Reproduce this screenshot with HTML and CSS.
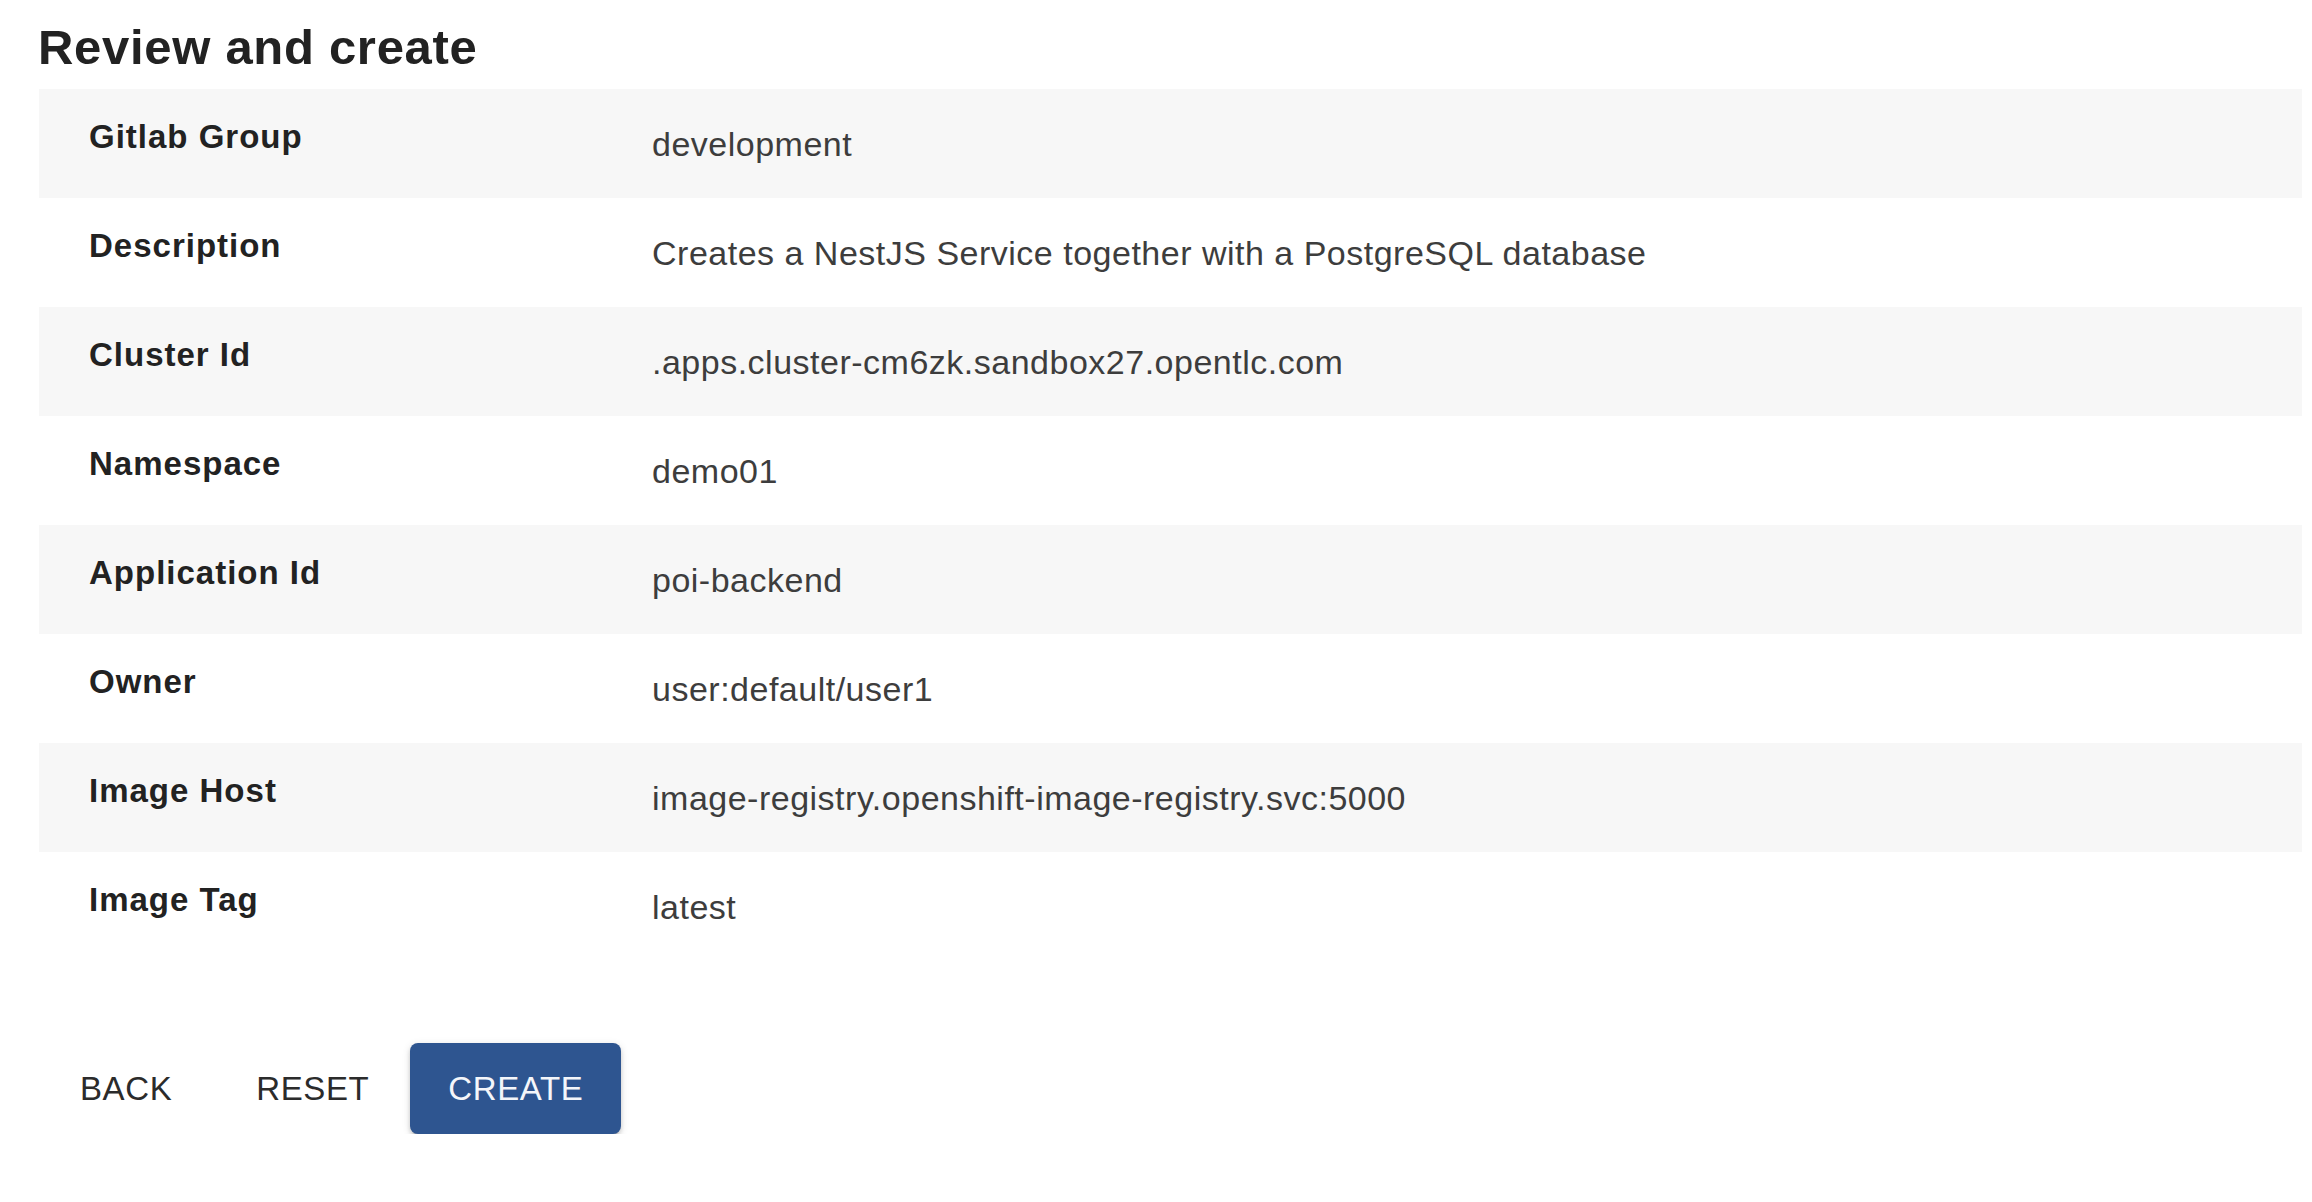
FILE: index.html
```html
<!DOCTYPE html>
<html lang="en">
<head>
<meta charset="utf-8">
<title>Review and create</title>
<link rel="stylesheet" href="styles.css">
</head>
<body>
<main class="page">
  <h1 class="title">Review and create</h1>
  <div class="review">
    <div class="row"><div class="label">Gitlab Group</div><div class="value">development</div></div>
    <div class="row"><div class="label">Description</div><div class="value">Creates a NestJS Service together with a PostgreSQL database</div></div>
    <div class="row"><div class="label">Cluster Id</div><div class="value">.apps.cluster-cm6zk.sandbox27.opentlc.com</div></div>
    <div class="row"><div class="label">Namespace</div><div class="value">demo01</div></div>
    <div class="row"><div class="label">Application Id</div><div class="value">poi-backend</div></div>
    <div class="row"><div class="label">Owner</div><div class="value">user:default/user1</div></div>
    <div class="row"><div class="label">Image Host</div><div class="value">image-registry.openshift-image-registry.svc:5000</div></div>
    <div class="row"><div class="label">Image Tag</div><div class="value">latest</div></div>
  </div>
  <div class="actions">
    <button class="btn btn-text btn-back" type="button">BACK</button>
    <button class="btn btn-text btn-reset" type="button">RESET</button>
    <button class="btn btn-primary" type="button">CREATE</button>
  </div>
</main>
</body>
</html>
```
FILE: styles.css
```css
html, body {
  margin: 0;
  padding: 0;
  background: #ffffff;
}

body {
  font-family: "Liberation Sans", Arial, Helvetica, sans-serif;
  color: #222222;
}

.page {
  padding: 19px 10px 0 38px;
}

.title {
  margin: 0 0 14px 0;
  font-size: 49px;
  line-height: 56px;
  font-weight: 700;
  letter-spacing: 0.7px;
  color: #222222;
}

.review {
  margin-left: 1px;
}

.row {
  display: grid;
  grid-template-columns: 613px 1fr;
  height: 109px;
  box-sizing: border-box;
}

.row:nth-child(odd) {
  background: #f7f7f7;
}

.label {
  padding: 28px 0 0 50px;
  font-size: 33px;
  line-height: 40px;
  font-weight: 700;
  letter-spacing: 1px;
  color: #222222;
}

.value {
  padding-top: 35px;
  font-size: 34px;
  line-height: 40px;
  letter-spacing: 0.5px;
  color: #3d3d3d;
}

.actions {
  display: flex;
  align-items: center;
  margin-top: 82px;
  padding-left: 25px;
}

.btn {
  font-family: "Liberation Sans", Arial, Helvetica, sans-serif;
  font-size: 33px;
  line-height: 40px;
  letter-spacing: 0.6px;
  height: 91px;
  border: none;
  border-radius: 8px;
  background: transparent;
  cursor: pointer;
  margin: 0;
}

.btn-text {
  padding: 0 17px;
  color: #2b2b2b;
}

.btn-back {
  margin-right: 50px;
}

.btn-reset {
  margin-right: 24px;
}

.btn-primary {
  padding: 0 38px;
  background: #2e5590;
  color: #f4f6fa;
  box-shadow: 0 5px 2px -3px rgba(0, 0, 0, 0.2), 0 3px 4px rgba(0, 0, 0, 0.14), 0 2px 9px rgba(0, 0, 0, 0.12);
}
```
